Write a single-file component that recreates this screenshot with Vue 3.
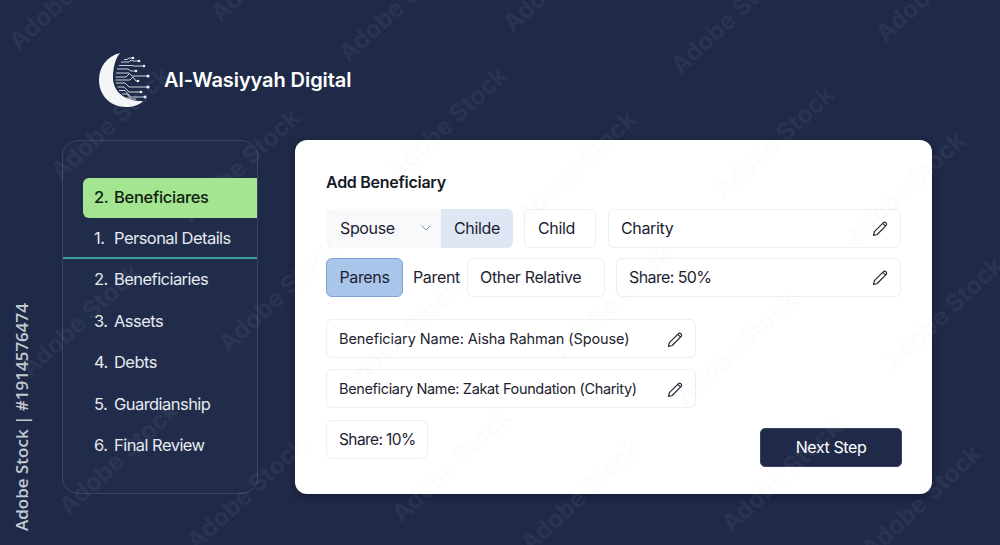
<script setup>
const steps = ['Personal Details', 'Beneficiaries', 'Assets', 'Debts', 'Guardianship', 'Final Review']

const circuitLines = [
  'M26 8.5 H29 L31 7 H34',
  'M23 11 H31 L33 9 L35 10 H40',
  'M21 14.5 H34 L36 15 H45',
  'M19 18 H30 L33 20 H37',
  'M18 22 H31 L34 25 H49',
  'M17.5 26 H28 L31 23',
  'M17.5 29 H32 L35 26 L38 30 H39',
  'M18 32 H27 L31 36 H49',
  'M19.5 36 H26 L31 41 H42',
  'M21 39.5 H27 L33 46 H46',
  'M24 43 H29 L33 48 H38',
  'M28 47 H31 L33 50 H36'
]
const circuitDots = [
  [35, 7, 1.3], [41, 10, 1.3], [46, 15, 1.3], [38, 20, 1.3], [50, 25, 1.6],
  [50, 36, 1.6], [40, 30, 1.3], [43, 41, 1.3], [47, 46, 1.5]
]

// stock watermark centres, read off the reference (not a regular grid)
const marks = [
  [68, -7], [270, -35], [398, 5], [562, -25], [730, 17], [935, -15],
  [110, 123], [447, 123], [774, 142], [240, 165], [576, 167], [905, 188],
  [80, 320], [278, 295], [400, 336], [612, 302], [736, 348], [943, 313],
  [118, 458], [246, 493], [451, 465], [580, 495], [781, 475], [921, 501]
]
</script>

<template>
  <div class="page">
    <header class="brand">
      <svg class="brand__logo" width="58" height="58" viewBox="0 0 58 58" aria-hidden="true">
        <path
          d="M22 2 C9 5 1 16 1 29 C1 45 13 56 28 56 C35 56 41 54 45 50 C28 51 15 41 15 27 C15 17 17 8 22 2 Z"
          fill="#f4f5f7"
        />
        <g fill="none" stroke="#e2e5ec" stroke-width="0.9">
          <path v-for="line in circuitLines" :key="line" :d="line" />
        </g>
        <circle v-for="dot in circuitDots" :key="dot.join()" :cx="dot[0]" :cy="dot[1]" :r="dot[2]" fill="#eef0f4" />
      </svg>
      <span class="brand__name">Al-Wasiyyah Digital</span>
    </header>

    <main class="layout">
      <nav class="side">
        <div class="side__active"><span class="side__num">2.</span>Beneficiares</div>
        <div class="side__item side__item--first"><span class="side__num">1.</span>Personal Details</div>
        <div class="side__rule"></div>
        <div v-for="(step, i) in steps.slice(1)" :key="step" class="side__item">
          <span class="side__num">{{ i + 2 }}.</span>{{ step }}
        </div>
      </nav>

      <section class="card">
        <h2 class="card__title">Add Beneficiary</h2>

        <div class="row">
          <div class="select">
            <span>Spouse</span>
            <svg width="12" height="8" viewBox="0 0 12 8" aria-hidden="true">
              <path d="M1.5 1.5 L6 6 L10.5 1.5" fill="none" stroke="#8b93a1" stroke-width="1" />
            </svg>
          </div>
          <div class="chip chip--childe">Childe</div>
          <div class="chip chip--child">Child</div>
          <div class="field field--charity">
            <span>Charity</span>
            <svg class="pen" width="18" height="18" viewBox="0 0 18 18" aria-hidden="true">
              <path d="M2.5 15.5 L3.4 11.6 L12.2 2.8 C13 2 14.2 2 15 2.8 C15.8 3.6 15.8 4.8 15 5.6 L6.2 14.5 Z M12 3.6 L14.3 5.9" />
            </svg>
          </div>
        </div>

        <div class="row row--second">
          <div class="chip chip--parens">Parens</div>
          <span class="plain">Parent</span>
          <div class="chip chip--other">Other Relative</div>
          <div class="field field--share">
            <span>Share: 50%</span>
            <svg class="pen" width="18" height="18" viewBox="0 0 18 18" aria-hidden="true">
              <path d="M2.5 15.5 L3.4 11.6 L12.2 2.8 C13 2 14.2 2 15 2.8 C15.8 3.6 15.8 4.8 15 5.6 L6.2 14.5 Z M12 3.6 L14.3 5.9" />
            </svg>
          </div>
        </div>

        <div class="entry entry--first">
          <span>Beneficiary Name: Aisha Rahman (Spouse)</span>
          <svg class="pen" width="18" height="18" viewBox="0 0 18 18" aria-hidden="true">
            <path d="M2.5 15.5 L3.4 11.6 L12.2 2.8 C13 2 14.2 2 15 2.8 C15.8 3.6 15.8 4.8 15 5.6 L6.2 14.5 Z M12 3.6 L14.3 5.9" />
          </svg>
        </div>
        <div class="entry entry--tight">
          <span>Beneficiary Name: Zakat Foundation (Charity)</span>
          <svg class="pen" width="18" height="18" viewBox="0 0 18 18" aria-hidden="true">
            <path d="M2.5 15.5 L3.4 11.6 L12.2 2.8 C13 2 14.2 2 15 2.8 C15.8 3.6 15.8 4.8 15 5.6 L6.2 14.5 Z M12 3.6 L14.3 5.9" />
          </svg>
        </div>

        <div class="foot">
          <div class="chip chip--ten">Share: 10%</div>
          <button class="next" type="button">Next Step</button>
        </div>
      </section>
    </main>

    <div class="credit">Adobe Stock | #1914576474</div>

    <div class="marks" aria-hidden="true">
      <span v-for="m in marks" :key="m.join()" class="mark" :style="{ left: m[0] + 'px', top: m[1] + 'px' }">Adobe Stock</span>
    </div>
  </div>
</template>

<style scoped>
.page {
  position: relative;
  width: 1000px;
  height: 545px;
  overflow: hidden;
  background: #1f2a48;
  font-family: Inter, "Liberation Sans", sans-serif;
  color: #1c2230;
}

.brand {
  display: flex;
  align-items: center;
  gap: 8px;
  height: 58px;
  padding: 51px 0 0 98px;
}

.brand__name {
  color: #fff;
  font-size: 20px;
  font-weight: 600;
  letter-spacing: -0.08px;
}

.layout {
  display: flex;
  gap: 37px;
  padding: 31px 0 0 62px;
}

.side {
  box-sizing: border-box;
  width: 196px;
  height: 354px;
  padding-top: 37px;
  border: 1px solid #3a4563;
  border-radius: 16px;
  background: #212c4b;
}

.side__num {
  display: inline-block;
  width: 20px;
}

.side__active {
  box-sizing: border-box;
  display: flex;
  align-items: center;
  height: 40px;
  margin-left: 20px;
  padding: 0 0 2px 11px;
  border-radius: 6px 0 0 6px;
  background: #a4e591;
  color: #10200f;
  font-size: 16.5px;
  font-weight: 500;
  letter-spacing: -0.3px;
}

.side__item {
  box-sizing: border-box;
  display: flex;
  align-items: center;
  height: 41.5px;
  padding: 0 0 1px 31px;
  color: #e6e9ef;
  font-size: 16.5px;
  font-weight: 400;
  letter-spacing: -0.55px;
}

.side__item--first {
  height: 39px;
  padding-bottom: 0;
}

.side__rule {
  height: 2px;
  background: #3c9f95;
}

.card {
  box-sizing: border-box;
  width: 637px;
  height: 354px;
  padding: 32px 30px 0 31px;
  border-radius: 12px;
  background: #fff;
  box-shadow: 0 3px 8px rgba(8, 12, 28, 0.45);
}

.card__title {
  margin: 0 0 17px;
  font-size: 16px;
  line-height: 20px;
  font-weight: 600;
  letter-spacing: -0.27px;
  color: #141a26;
}

.row {
  display: flex;
  align-items: center;
  height: 39px;
  font-size: 16px;
  letter-spacing: -0.35px;
}

.row--second {
  margin-top: 10px;
}

.select {
  box-sizing: border-box;
  display: flex;
  align-items: center;
  justify-content: space-between;
  width: 115px;
  height: 39px;
  padding: 0 9px 2px 14px;
  border-radius: 6px 0 0 6px;
  background: #f8f9fb;
}

.chip,
.field,
.entry {
  box-sizing: border-box;
  display: flex;
  align-items: center;
  height: 39px;
  padding-bottom: 2px;
  border: 1px solid #eceff4;
  border-radius: 6px;
  background: #fff;
}

.chip--childe {
  justify-content: center;
  width: 72px;
  border: 0;
  border-radius: 0 6px 6px 0;
  background: #dfe7f4;
}

.chip--child {
  width: 72px;
  margin-left: 11px;
  padding-left: 13px;
}

.chip--parens {
  justify-content: center;
  width: 77px;
  border-color: #7fa3d3;
  background: #a9c5ea;
}

.plain {
  width: 48px;
  margin-left: 10px;
  padding-bottom: 2px;
}

.chip--other {
  width: 138px;
  margin-left: 6px;
  padding-left: 12px;
}

.chip--ten {
  width: 102px;
  padding-left: 12px;
  padding-bottom: 0;
  font-size: 15.5px;
  letter-spacing: -0.6px;
}

.field {
  justify-content: space-between;
  padding-left: 12px;
  padding-right: 11px;
}

.field--charity {
  width: 293px;
  margin-left: 12px;
}

.field--share {
  width: 285px;
  margin-left: 11px;
  letter-spacing: -0.6px;
}

.entry {
  justify-content: space-between;
  width: 370px;
  margin-top: 11px;
  padding-left: 12px;
  padding-right: 11px;
  padding-bottom: 0;
  font-size: 14.5px;
  letter-spacing: -0.08px;
}

.entry--first {
  margin-top: 22px;
}

.entry--tight {
  letter-spacing: -0.35px;
}

.pen {
  flex: none;
  margin-top: 2px;
  fill: none;
  stroke: #242a36;
  stroke-width: 1.2;
  stroke-linejoin: round;
}

.foot {
  display: flex;
  align-items: flex-start;
  justify-content: space-between;
  margin-top: 12px;
}

.next {
  width: 142px;
  height: 39px;
  margin-top: 8px;
  padding-bottom: 3px;
  border: 1px solid #3a4564;
  border-radius: 5px;
  background: #1f2a48;
  color: #fff;
  font-family: inherit;
  font-size: 16px;
  letter-spacing: -0.4px;
}

.credit {
  position: absolute;
  left: 10px;
  bottom: 14px;
  transform-origin: 0 100%;
  transform: rotate(-90deg) translateY(100%);
  color: #c3c8d3;
  font-family: "Open Sans", "Liberation Sans", sans-serif;
  font-size: 17px;
  font-weight: 600;
  white-space: nowrap;
}

.marks {
  position: absolute;
  inset: 0;
  pointer-events: none;
}

.mark {
  position: absolute;
  transform: translate(-50%, -50%) rotate(-43deg);
  color: rgba(205, 210, 220, 0.075);
  font-size: 24.5px;
  font-weight: 700;
  white-space: nowrap;
}
</style>

<style>
html, body {
  background: #1f2a48;
}
</style>
